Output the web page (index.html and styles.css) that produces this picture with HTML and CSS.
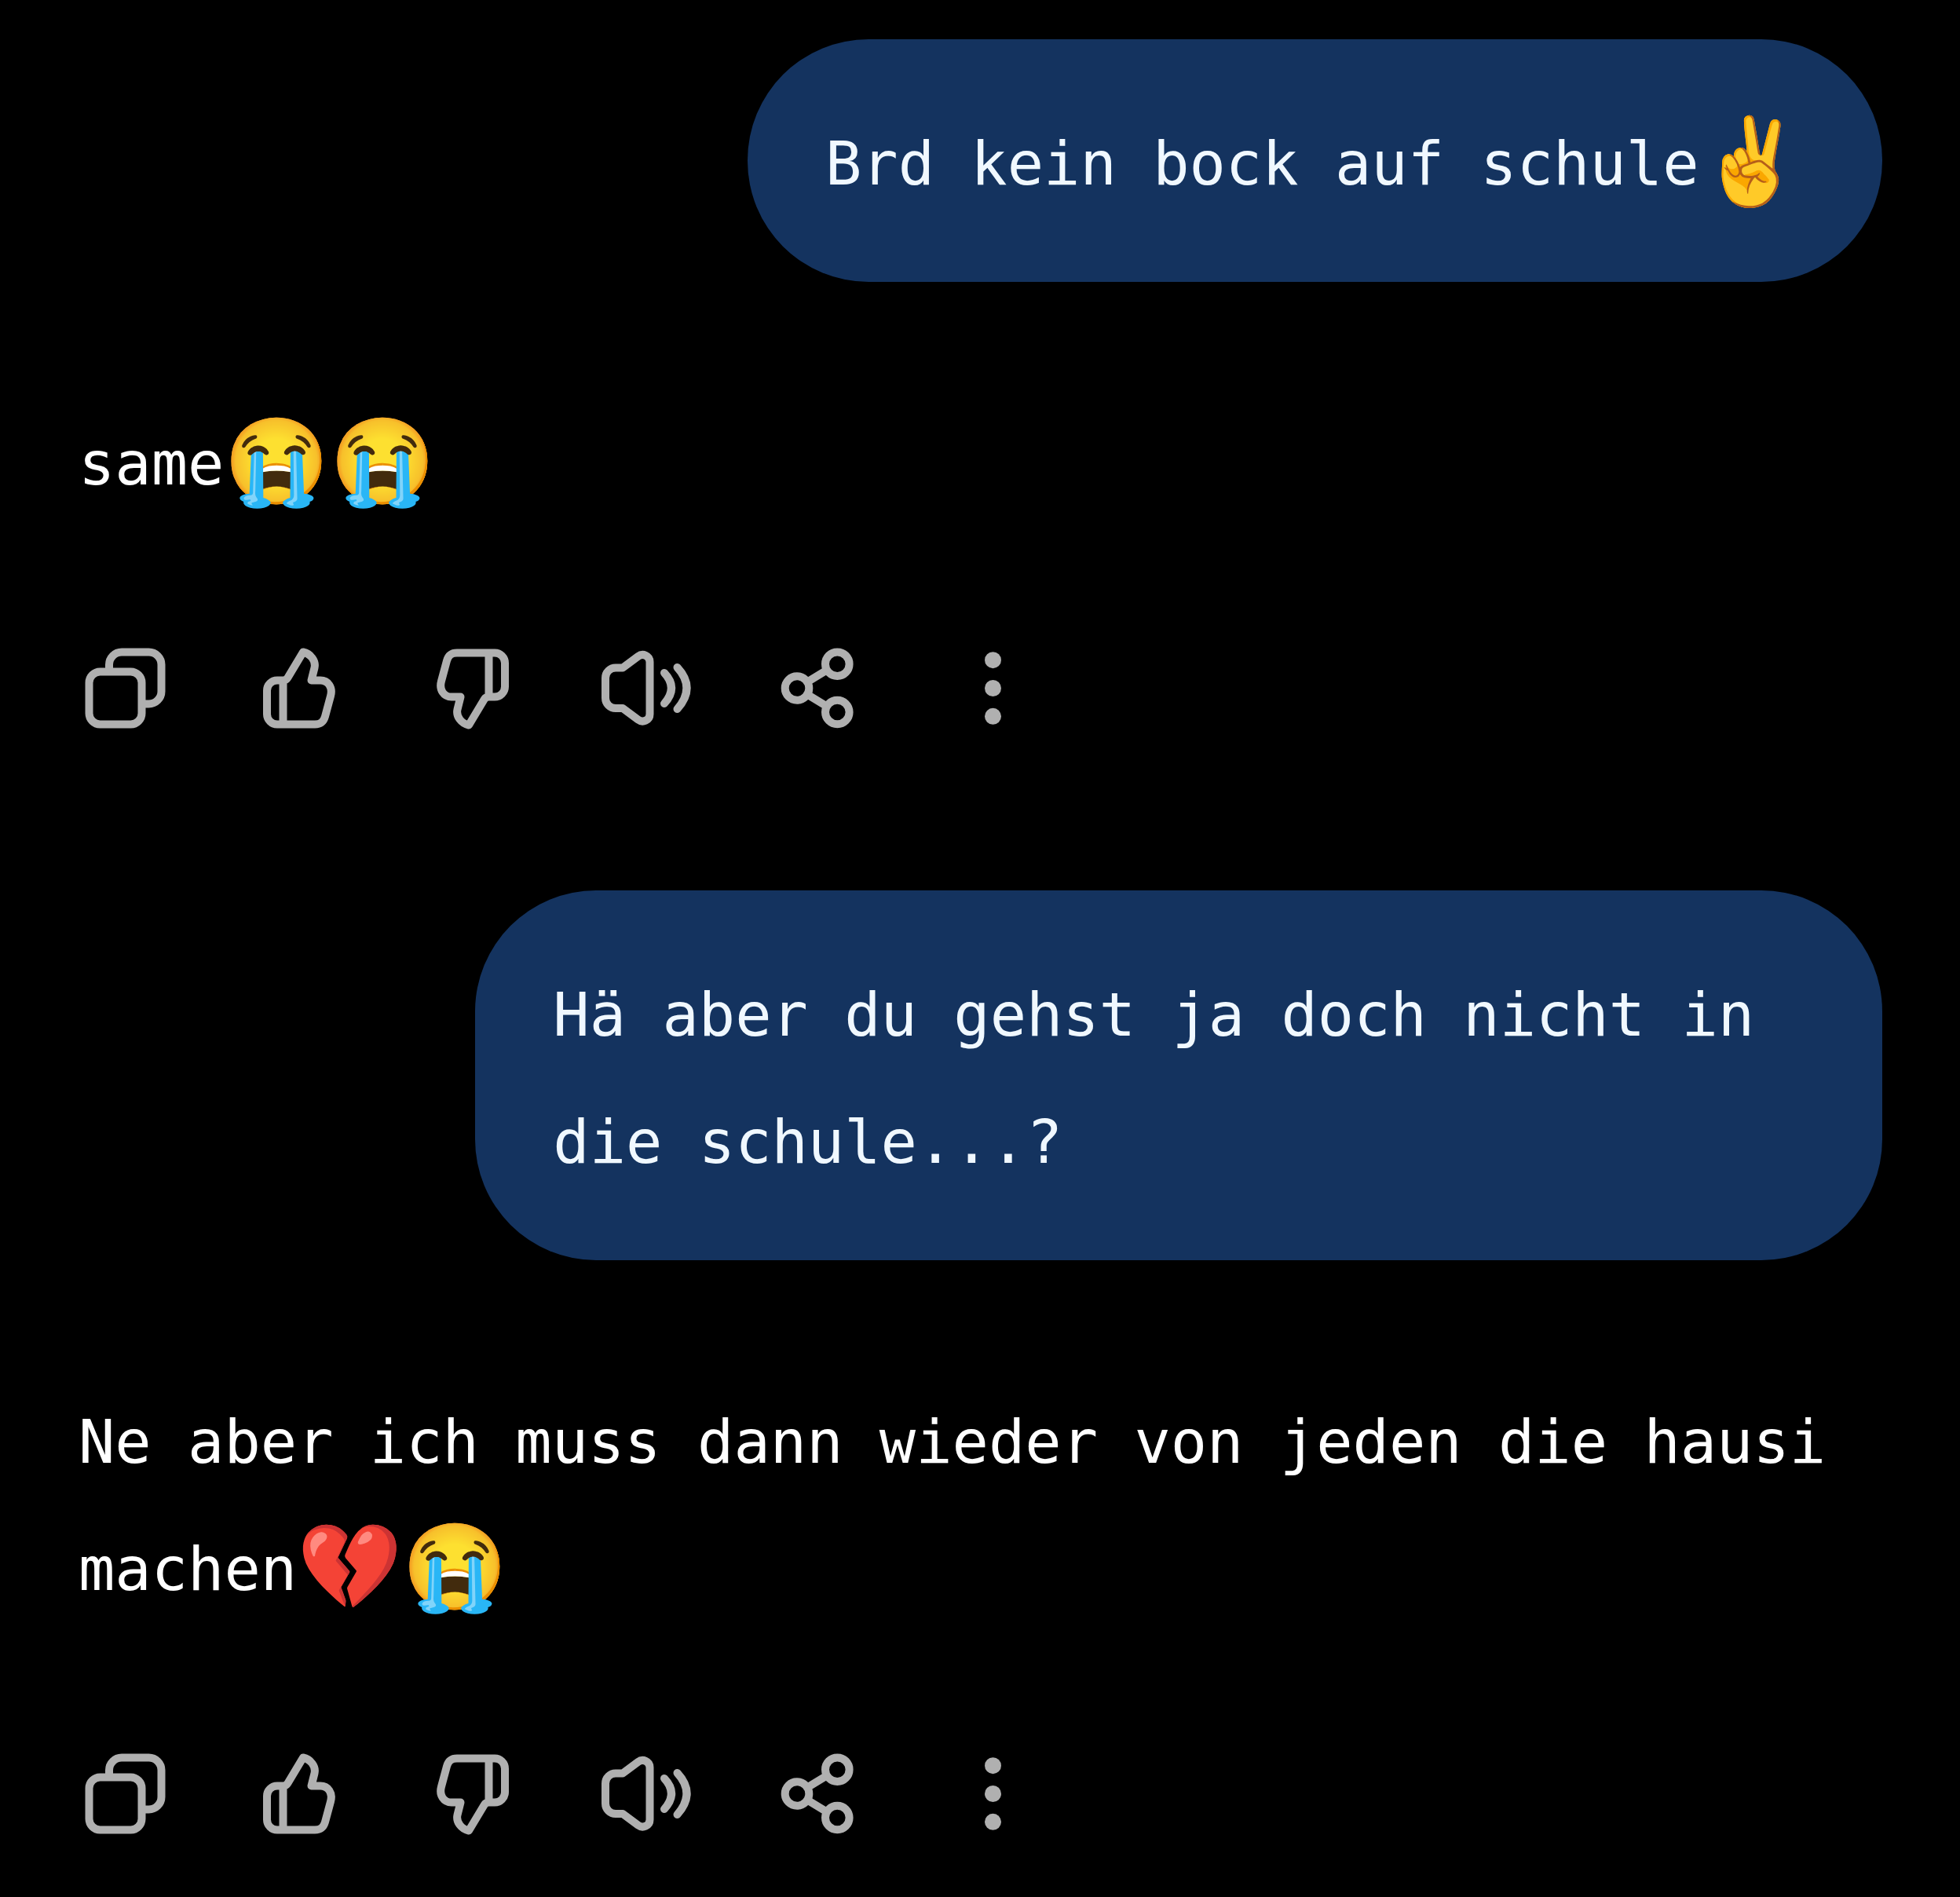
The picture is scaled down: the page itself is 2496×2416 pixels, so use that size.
FILE: index.html
```
<!DOCTYPE html>
<html lang="de">
<head>
<meta charset="utf-8">
<meta name="viewport" content="width=device-width, initial-scale=1">
<title>Chat</title>
<link rel="stylesheet" href="styles.css">
</head>
<body>
<svg class="sprite" aria-hidden="true">
  <symbol id="copy" viewBox="0 0 120 104">
    <rect x="13.5" y="30.5" width="67" height="67" rx="14"/>
    <path d="M39 27v-5.500a16 16 0 0 1 16-16h34.500a16 16 0 0 1 16 16v34a16 16 0 0 1-16 16H84"/>
  </symbol>
  <symbol id="thumb" viewBox="0 0 120 104">
    <path d="M39.500 41.500H32a13 13 0 0 0-13 13v30a13 13 0 0 0 13 13h48c7 0 11-3 13-10l7-26c3-11-3-20-13-20H75.500l4-16c2-9-5-18-14.500-20L45.500 38q-2 3.500-6 3.500v56"/>
  </symbol>
  <symbol id="speaker" viewBox="0 0 120 104">
    <path d="M30 25.500H21a13 13 0 0 0-13 13v25.500a13 13 0 0 0 13 13h9L49.500 91.500c6 4.500 15 1 15-7V18c0-8-9-11.500-15-7Z"/>
    <path d="M83 32q18 19 0 39M99.500 25q24 26 0 53"/>
  </symbol>
  <symbol id="share" viewBox="0 0 120 104">
    <circle cx="31" cy="51.500" r="15.300"/><circle cx="82.300" cy="20.700" r="15.300"/><circle cx="82.300" cy="82" r="15.300"/>
    <path d="M45 43l23-14M45 60l23 14"/>
  </symbol>
  <symbol id="more" viewBox="0 0 120 104">
    <g fill="currentColor" stroke="none"><circle cx="59.500" cy="15.700" r="10.500"/><circle cx="59.500" cy="51.500" r="10.500"/><circle cx="59.500" cy="87.300" r="10.500"/></g>
  </symbol>
</svg>
<main class="chat">
  <p class="bubble">Brd kein bock auf schule<span class="emoji">✌️</span></p>
  <article class="reply">
    <p class="reply-text">same<span class="emoji">😭😭</span></p>
    <div class="actions">
      <button type="button" aria-label="Kopieren"><svg><use href="#copy"/></svg></button>
      <button type="button" aria-label="Gute Antwort"><svg><use href="#thumb"/></svg></button>
      <button type="button" aria-label="Schlechte Antwort"><svg class="flipped"><use href="#thumb"/></svg></button>
      <button type="button" aria-label="Vorlesen"><svg><use href="#speaker"/></svg></button>
      <button type="button" aria-label="Teilen"><svg><use href="#share"/></svg></button>
      <button type="button" aria-label="Mehr"><svg><use href="#more"/></svg></button>
    </div>
  </article>
  <p class="bubble">Hä aber du gehst ja doch nicht in die schule...?</p>
  <article class="reply">
    <p class="reply-text">Ne aber ich muss dann wieder von jeden die hausi machen<span class="emoji">💔😭</span></p>
    <div class="actions">
      <button type="button" aria-label="Kopieren"><svg><use href="#copy"/></svg></button>
      <button type="button" aria-label="Gute Antwort"><svg><use href="#thumb"/></svg></button>
      <button type="button" aria-label="Schlechte Antwort"><svg class="flipped"><use href="#thumb"/></svg></button>
      <button type="button" aria-label="Vorlesen"><svg><use href="#speaker"/></svg></button>
      <button type="button" aria-label="Teilen"><svg><use href="#share"/></svg></button>
      <button type="button" aria-label="Mehr"><svg><use href="#more"/></svg></button>
    </div>
  </article>
</main>
</body>
</html>
```
FILE: styles.css
```
* {
  box-sizing: border-box;
}

body {
  margin: 0;
  background: #000;
  color: #fff;
  font: 77px/162px "DejaVu Sans Mono", monospace;
}

p {
  margin: 0;
}

.sprite {
  display: none;
}

.chat {
  display: flex;
  flex-direction: column;
  align-items: flex-start;
  padding: 50px 99px 76px 100px;
}

.bubble {
  align-self: flex-end;
  max-width: 78%;
  padding: 78px 99px 69px;
  border-radius: 154px;
  background: #14335f;
  color: #f0f8ff;
}

.reply {
  margin: 151px 0 205px;
}

.reply:last-child {
  margin-bottom: 0;
}

.emoji {
  font-family: "Noto Color Emoji", sans-serif;
  font-size: 108px;
  line-height: 0;
  vertical-align: -8px;
}

.actions {
  display: flex;
  gap: 101px;
  margin-top: 153px;
}

.actions button {
  width: 120px;
  height: 104px;
  padding: 0;
  border: 0;
  background: none;
  color: #b0b0b0;
}

.actions svg {
  display: block;
  width: 100%;
  height: 100%;
  fill: none;
  stroke: currentColor;
  stroke-width: 10;
  stroke-linecap: round;
  stroke-linejoin: round;
}

.flipped {
  transform: rotate(180deg);
}
```
